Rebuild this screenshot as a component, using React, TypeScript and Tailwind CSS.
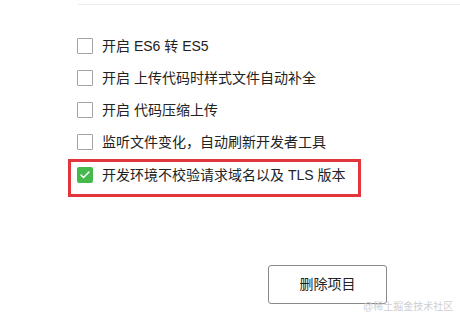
import { Check } from "lucide-react";

const rows = [
  "开启 ES6 转 ES5",
  "开启 上传代码时样式文件自动补全",
  "开启 代码压缩上传",
  "监听文件变化，自动刷新开发者工具",
];

const font = { fontFamily: '"Liberation Sans", "Noto Sans CJK SC", sans-serif' };

const Box = ({ checked }: { checked?: boolean }) =>
  checked ? (
    <span className="grid h-[16px] w-[16px] place-items-center rounded-[2px] bg-[#45b94b]">
      <Check className="h-[12px] w-[12px] text-white" strokeWidth={3} />
    </span>
  ) : (
    <span className="h-[16px] w-[16px] rounded-[1px] border border-[#a3a3a3] bg-white" />
  );

export default function App() {
  return (
    <div className="relative h-[323px] w-[460px] overflow-hidden bg-white text-[14px] text-[#222]" style={font}>
      <div className="ml-[78px] mt-[4px] h-px bg-[#ebebeb]" />
      <div className="pl-[68px] pt-[25px]">
        {rows.map((r) => (
          <div key={r} className="flex h-[32px] items-center gap-[9px] pl-[9px]">
            <Box />
            <span>{r}</span>
          </div>
        ))}
        <div className="mt-[1px] w-[293px] border-[3px] border-[#e3363c] pb-[6px] pl-[6px]">
          <div className="flex h-[26px] items-center gap-[9px]">
            <Box checked />
            <span>开发环境不校验请求域名以及 TLS 版本</span>
          </div>
        </div>
        <button className="ml-[200px] mt-[68px] h-[39px] w-[119px] rounded-[3px] border border-[#8a8a8a] bg-white text-[14px] text-[#222]">
          删除项目
        </button>
      </div>
      <div className="absolute left-[363px] top-[300px] whitespace-nowrap text-[10px] leading-[14px] text-[#cfcfcf]">
        @稀土掘金技术社区
      </div>
    </div>
  );
}
